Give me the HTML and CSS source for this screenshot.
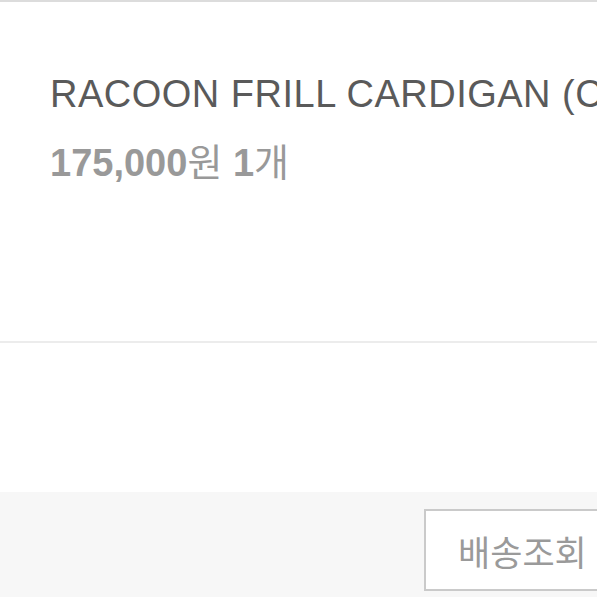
FILE: index.html
```html
<!DOCTYPE html>
<html lang="ko">
<head>
<meta charset="utf-8">
<link rel="stylesheet" href="styles.css">
</head>
<body>
<div class="page">
  <section class="item">
    <h1 class="title">RACOON FRILL CARDIGAN (CREAM)</h1>
    <p class="price"><b>175,000</b>원 <b>1</b>개</p>
  </section>
  <div class="blank"></div>
  <footer class="footer">
    <button class="track">배송조회</button>
  </footer>
</div>
</body>
</html>
```

FILE: styles.css
```css
html, body {
  margin: 0;
  padding: 0;
  background: #fff;
  overflow: hidden;
}
.page {
  width: 597px;
  height: 597px;
  overflow: hidden;
  border-top: 2px solid #dcdcdc;
  box-sizing: border-box;
  font-family: "Liberation Sans", "Noto Sans CJK KR", sans-serif;
}
.item {
  padding: 69px 0 155px 50px;
  border-bottom: 2px solid #ececec;
}
.title {
  margin: 0;
  font-size: 38px;
  line-height: 46px;
  font-weight: normal;
  letter-spacing: 0.5px;
  color: #5a5a5a;
  white-space: nowrap;
}
.price {
  margin: 23px 0 0;
  font-size: 38px;
  line-height: 46px;
  color: #999;
  white-space: nowrap;
}
.price b {
  font-weight: bold;
}
.blank {
  height: 149px;
}
.footer {
  background: #f7f7f7;
  height: 105px;
  padding: 17px 0 0 424px;
  box-sizing: border-box;
}
.track {
  display: flex;
  align-items: center;
  height: 82px;
  width: 220px;
  padding: 0 0 0 32px;
  box-sizing: border-box;
  background: #fff;
  border: 2px solid #cacaca;
  border-radius: 0;
  font-family: "Noto Sans CJK KR", sans-serif;
  font-size: 35px;
  color: #9a9a9a;
  white-space: nowrap;
}
```
